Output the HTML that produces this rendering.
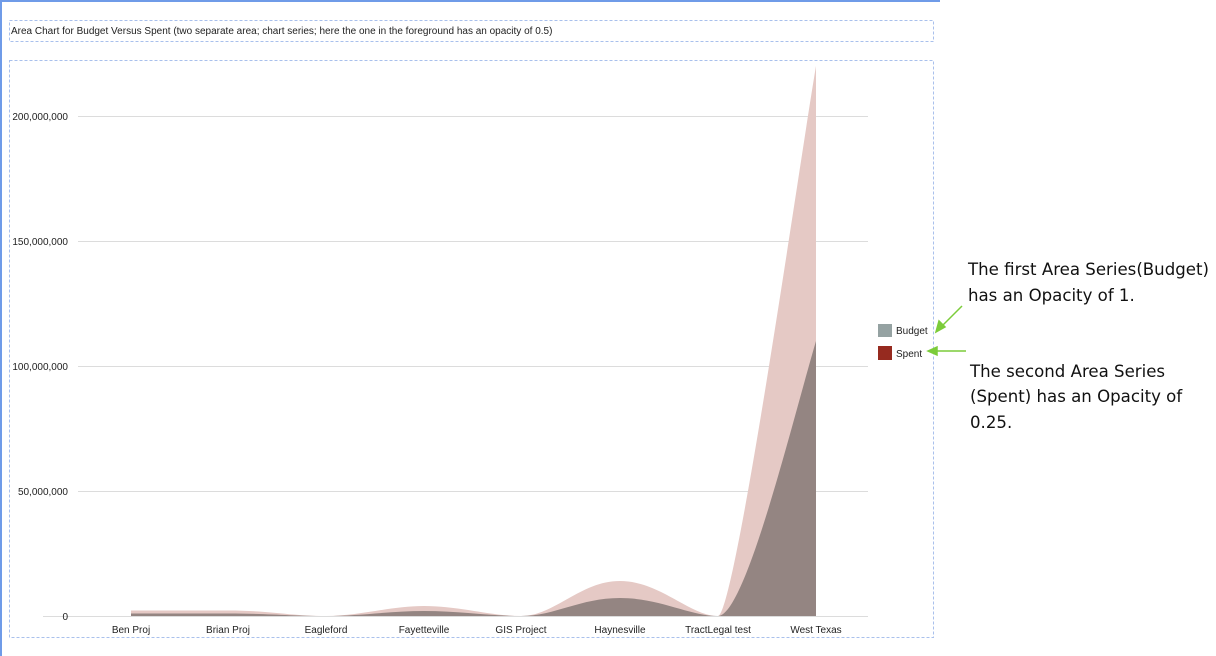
<!DOCTYPE html>
<html><head><meta charset="utf-8"><style>
body{margin:0;width:1216px;height:656px;background:#fff;overflow:hidden;font-family:"Liberation Sans",sans-serif;}
</style></head><body>
<svg width="1216" height="656" viewBox="0 0 1216 656" xmlns="http://www.w3.org/2000/svg" style="position:absolute;left:0;top:0">
<rect x="0" y="0" width="940" height="2" fill="#6f9be8"/>
<rect x="0" y="0" width="2" height="656" fill="#6f9be8"/>
<rect x="9.5" y="20.5" width="924" height="21" fill="none" stroke="#a9c0ec" stroke-dasharray="3,2"/>
<rect x="9.5" y="60.5" width="924" height="577" fill="none" stroke="#a9c0ec" stroke-dasharray="3,2"/>
<text x="11" y="34" font-size="10" fill="#222">Area Chart for Budget Versus Spent (two separate area; chart series; here the one in the foreground has an opacity of 0.5)</text>
<g stroke="#dcdcdc" stroke-width="1">
<line x1="78" y1="116.5" x2="868" y2="116.5"/>
<line x1="78" y1="241.5" x2="868" y2="241.5"/>
<line x1="78" y1="366.5" x2="868" y2="366.5"/>
<line x1="78" y1="491.5" x2="868" y2="491.5"/>
<line x1="43" y1="616.5" x2="868" y2="616.5"/>
</g>
<g font-size="10" fill="#222" text-anchor="end">
<text x="68" y="120">200,000,000</text>
<text x="68" y="245">150,000,000</text>
<text x="68" y="370">100,000,000</text>
<text x="68" y="495">50,000,000</text>
<text x="68" y="620">0</text>
</g>
<path d="M131,616 L131,610.5 L228,610.5 C270,610.5 290,616 326,616 C360,616 390,606 424,606 C460,606 490,616 521,616 C555,616 580,581 620,581 C660,581 690,616 718,616 C735,616 800,160 816,66 L816,616 Z" fill="#e5c9c5"/>
<path d="M131,616 L131,613.5 L228,613.5 C270,613.5 290,616 326,616 C360,616 390,611 424,611 C460,611 490,616 521,616 C555,616 580,598 620,598 C660,598 690,616 718,616 C745,616 790,430 816,341 L816,616 Z" fill="#948582"/>
<g font-size="10" fill="#222" text-anchor="middle">
<text x="131" y="633">Ben Proj</text>
<text x="228" y="633">Brian Proj</text>
<text x="326" y="633">Eagleford</text>
<text x="424" y="633">Fayetteville</text>
<text x="521" y="633">GIS Project</text>
<text x="620" y="633">Haynesville</text>
<text x="718" y="633">TractLegal test</text>
<text x="816" y="633">West Texas</text>
</g>
<rect x="878" y="324" width="14" height="13" fill="#95a2a2"/>
<rect x="878" y="346" width="14" height="14" fill="#962a1f"/>
<text x="896" y="334" font-size="10" fill="#222">Budget</text>
<text x="896" y="357" font-size="10" fill="#222">Spent</text>
<g stroke="#7ccc3a" stroke-width="1.5" fill="#7ccc3a">
<line x1="962" y1="306" x2="940" y2="328"/>
<polygon points="936,332 939,321 945,327"/>
<line x1="966" y1="351" x2="934" y2="351"/>
<polygon points="928,351 937,347 937,355"/>
</g>
<g font-size="16.6" fill="#111" font-family="'DejaVu Sans','Liberation Sans',sans-serif">
<text x="968" y="275">The first Area Series(Budget)</text>
<text x="968" y="301">has an Opacity of 1.</text>
<text x="970" y="377">The second Area Series</text>
<text x="970" y="402">(Spent) has an Opacity of</text>
<text x="970" y="428">0.25.</text>
</g>
</svg>
</body></html>
